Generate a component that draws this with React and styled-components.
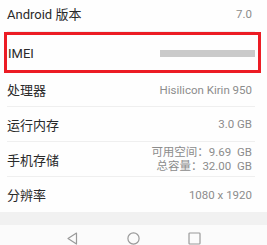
import React from 'react';
import styled, { createGlobalStyle } from 'styled-components';

const GlobalStyle = createGlobalStyle`
  html, body {
    margin: 0;
    padding: 0;
    background: #fdfdfd;
  }
  body {
    font-family: Roboto, "Noto Sans CJK SC", sans-serif;
    overflow: hidden;
  }
`;

const Screen = styled.div`
  width: 267px;
  height: 245px;
  display: flex;
  flex-direction: column;
  background: #fdfdfd;
  overflow: hidden;
`;

const List = styled.div`
  display: flex;
  flex-direction: column;
  background: #fefefe;
`;

const Row = styled.div`
  display: flex;
  align-items: center;
  justify-content: space-between;
  box-sizing: border-box;
  height: ${(p) => p.h}px;
  margin: 0 ${(p) => (p.highlight ? 6 : 12)}px 0 ${(p) => (p.highlight ? 4 : 7)}px;
  padding: ${(p) => (p.highlight ? '2px 0 0 1px' : `0 0 ${p.shift || 0}px 0`)};
  border: ${(p) => (p.highlight ? '3px solid #ec1c24' : 'none')};
  border-bottom: ${(p) =>
    p.highlight ? '3px solid #ec1c24' : p.last ? 'none' : '1px solid #efefef'};
`;

const Label = styled.span`
  font-size: 13px;
  color: #2a2a2a;
`;

const Value = styled.span`
  font-size: 11.5px;
  color: #8c8c8c;
  text-align: right;
  line-height: 14px;
  padding-right: 3px;
  white-space: pre;
`;

const Line = styled.div`
  height: 14px;
  overflow: visible;
`;

const Masked = styled.span`
  display: block;
  width: 95px;
  height: 7px;
  margin-right: 3px;
  background: #cacaca;
`;

const Gap = styled.div`
  height: 13px;
  background: #f1f1f1;
`;

const NavBar = styled.div`
  flex: 1;
  display: flex;
  justify-content: center;
  align-items: flex-start;
  gap: 48px;
  padding-top: 7px;
  background: #fbfbfb;
`;

const NavIcon = styled.svg`
  width: 13px;
  height: 13px;
  display: block;
`;

const rows = [
  { label: '处理器', value: 'Hisilicon Kirin 950', h: 34 },
  { label: '运行内存', value: '3.0 GB', h: 35 },
  {
    label: '手机存储',
    value: ['可用空间：9.69  GB', '总容量：32.00  GB'],
    h: 35,
  },
  { label: '分辨率', value: '1080 x 1920', h: 35, last: true },
];

const App = () => {
  return (
    <Screen>
      <GlobalStyle />
      <List>
        <Row h={32} shift={4}>
          <Label>Android 版本</Label>
          <Value>7.0</Value>
        </Row>
        <Row h={41} highlight>
          <Label>IMEI</Label>
          <Masked />
        </Row>
        {rows.map((r) => (
          <Row key={r.label} h={r.h} last={r.last}>
            <Label>{r.label}</Label>
            <Value>
              {Array.isArray(r.value)
                ? r.value.map((line) => <Line key={line}>{line}</Line>)
                : r.value}
            </Value>
          </Row>
        ))}
      </List>
      <Gap />
      <NavBar>
        <NavIcon viewBox="0 0 13 13">
          <path d="M10.5 1 L2 6.5 L10.5 12 Z" fill="none" stroke="#9a9a9a" strokeWidth="1.2" strokeLinejoin="round" />
        </NavIcon>
        <NavIcon viewBox="0 0 13 13">
          <circle cx="6.5" cy="6.5" r="5.6" fill="none" stroke="#9a9a9a" strokeWidth="1.2" />
        </NavIcon>
        <NavIcon viewBox="0 0 13 13">
          <rect x="1" y="1" width="11" height="11" rx="0.8" fill="none" stroke="#9a9a9a" strokeWidth="1.2" />
        </NavIcon>
      </NavBar>
    </Screen>
  );
};

export default App;
